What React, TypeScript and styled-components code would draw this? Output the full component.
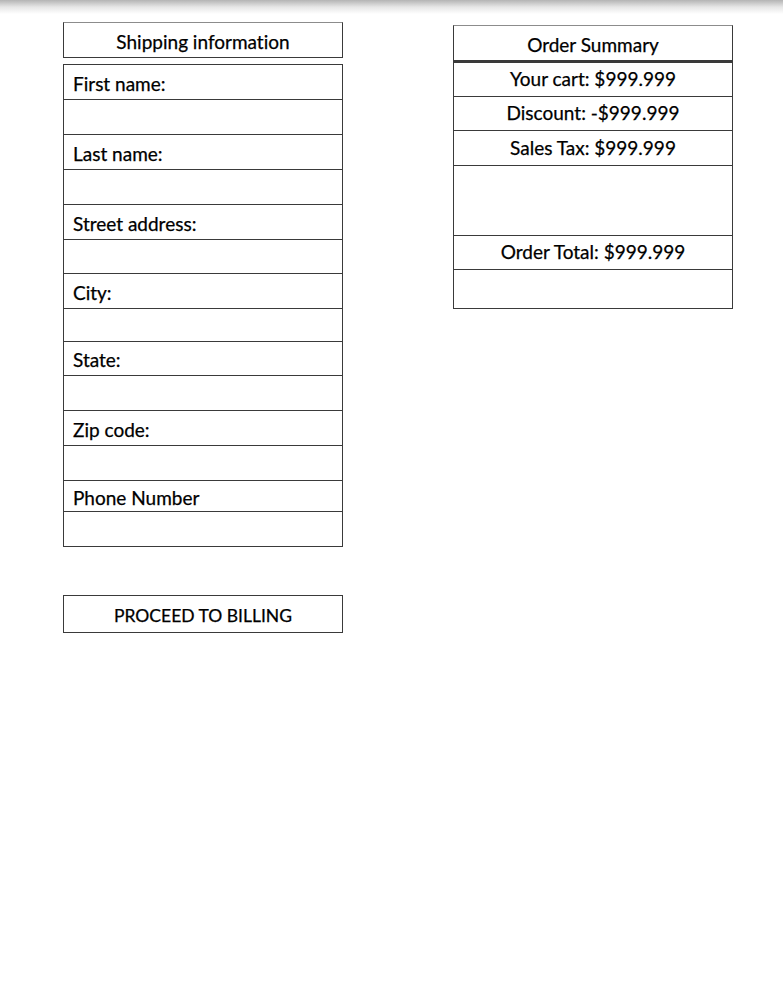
import React from "react";
import styled, { createGlobalStyle } from "styled-components";

const GlobalStyle = createGlobalStyle`
    body {
        margin: 0;
        background: #ffffff;
        font-family: Lato, "Open Sans", sans-serif;
        font-variant-ligatures: none;
        -webkit-text-stroke: 0.25px #000;
        color: #000;
    }
`;

const App = () => {
    // label / input heights taken from the mockup
    const fields = [
        { id: 1, label: "First name:", lh: 35, ih: 35 },
        { id: 2, label: "Last name:", lh: 35, ih: 35 },
        { id: 3, label: "Street address:", lh: 35, ih: 34 },
        { id: 4, label: "City:", lh: 35, ih: 33 },
        { id: 5, label: "State:", lh: 34, ih: 35 },
        { id: 6, label: "Zip code:", lh: 35, ih: 35 },
        { id: 7, label: "Phone Number", lh: 31, ih: 34 },
    ];

    const summary = [
        { id: 1, text: "Your cart: $999.999", h: 34 },
        { id: 2, text: "Discount: -$999.999", h: 34 },
        { id: 3, text: "Sales Tax: $999.999", h: 35 },
        { id: 4, text: "", h: 70 },
        { id: 5, text: "Order Total: $999.999", h: 34 },
        { id: 6, text: "", h: 38 },
    ];

    return (
        <Page>
            <GlobalStyle />
            <TopShade />
            <Columns>
                <LeftColumn>
                    <HeaderBox>Shipping information</HeaderBox>
                    <FieldList>
                        {fields.map((f) => (
                            <React.Fragment key={f.id}>
                                <LabelRow $h={f.lh}>{f.label}</LabelRow>
                                <InputRow $h={f.ih} />
                            </React.Fragment>
                        ))}
                    </FieldList>
                    <ProceedBtn type="button">PROCEED TO BILLING</ProceedBtn>
                </LeftColumn>

                <RightColumn>
                    <HeaderBox>Order Summary</HeaderBox>
                    <SummaryList>
                        {summary.map((s) => (
                            <SummaryRow key={s.id} $h={s.h}>
                                {s.text}
                            </SummaryRow>
                        ))}
                    </SummaryList>
                </RightColumn>
            </Columns>
        </Page>
    );
};

export default App;

const Page = styled.div`
    width: 783px;
    min-height: 982px;
    background: #fff;
`;

const TopShade = styled.div`
    height: 14px;
    background: linear-gradient(#b4b4b4, #e6e6e6 50%, #ffffff);
`;

const Columns = styled.div`
    display: flex;
    gap: 110px;
    padding-left: 63px;
    padding-top: 8px;
`;

const LeftColumn = styled.div`
    width: 280px;
    display: flex;
    flex-direction: column;
`;

const RightColumn = styled.div`
    width: 280px;
    display: flex;
    flex-direction: column;
    padding-top: 3px;
`;

const HeaderBox = styled.div`
    box-sizing: border-box;
    height: 36px;
    border: 1px solid #3a3a3a;
    border-top-color: #8c8c8c;
    display: flex;
    align-items: center;
    justify-content: center;
    font-size: 19px;
    padding-top: 2px;
`;

const FieldList = styled.div`
    margin-top: 6px;
    border: 1px solid #3a3a3a;
    display: flex;
    flex-direction: column;
`;

const LabelRow = styled.div<{ $h: number }>`
    box-sizing: border-box;
    height: ${(p) => p.$h}px;
    border-bottom: 1px solid #3a3a3a;
    display: flex;
    align-items: center;
    padding-left: 9px;
    padding-top: 2px;
    font-size: 19px;
`;

const InputRow = styled.div<{ $h: number }>`
    box-sizing: border-box;
    height: ${(p) => p.$h}px;
    border-bottom: 1px solid #3a3a3a;

    &:last-child {
        border-bottom: none;
    }
`;

const ProceedBtn = styled.button`
    margin-top: 48px;
    box-sizing: border-box;
    height: 38px;
    width: 280px;
    background: #fff;
    border: 1px solid #3a3a3a;
    font-family: Lato, "Open Sans", sans-serif;
    font-size: 17.5px;
    -webkit-text-stroke: 0.25px #000;
    color: #000;
    padding: 2px 0 0;
    cursor: pointer;
`;

const SummaryList = styled.div`
    border: 1px solid #3a3a3a;
    border-top: 2px solid #3a3a3a;
    display: flex;
    flex-direction: column;
`;

const SummaryRow = styled.div<{ $h: number }>`
    box-sizing: border-box;
    height: ${(p) => p.$h}px;
    border-bottom: 1px solid #3a3a3a;
    display: flex;
    align-items: center;
    justify-content: center;
    font-size: 19px;
    padding-bottom: 2px;

    &:last-child {
        border-bottom: none;
    }
`;
